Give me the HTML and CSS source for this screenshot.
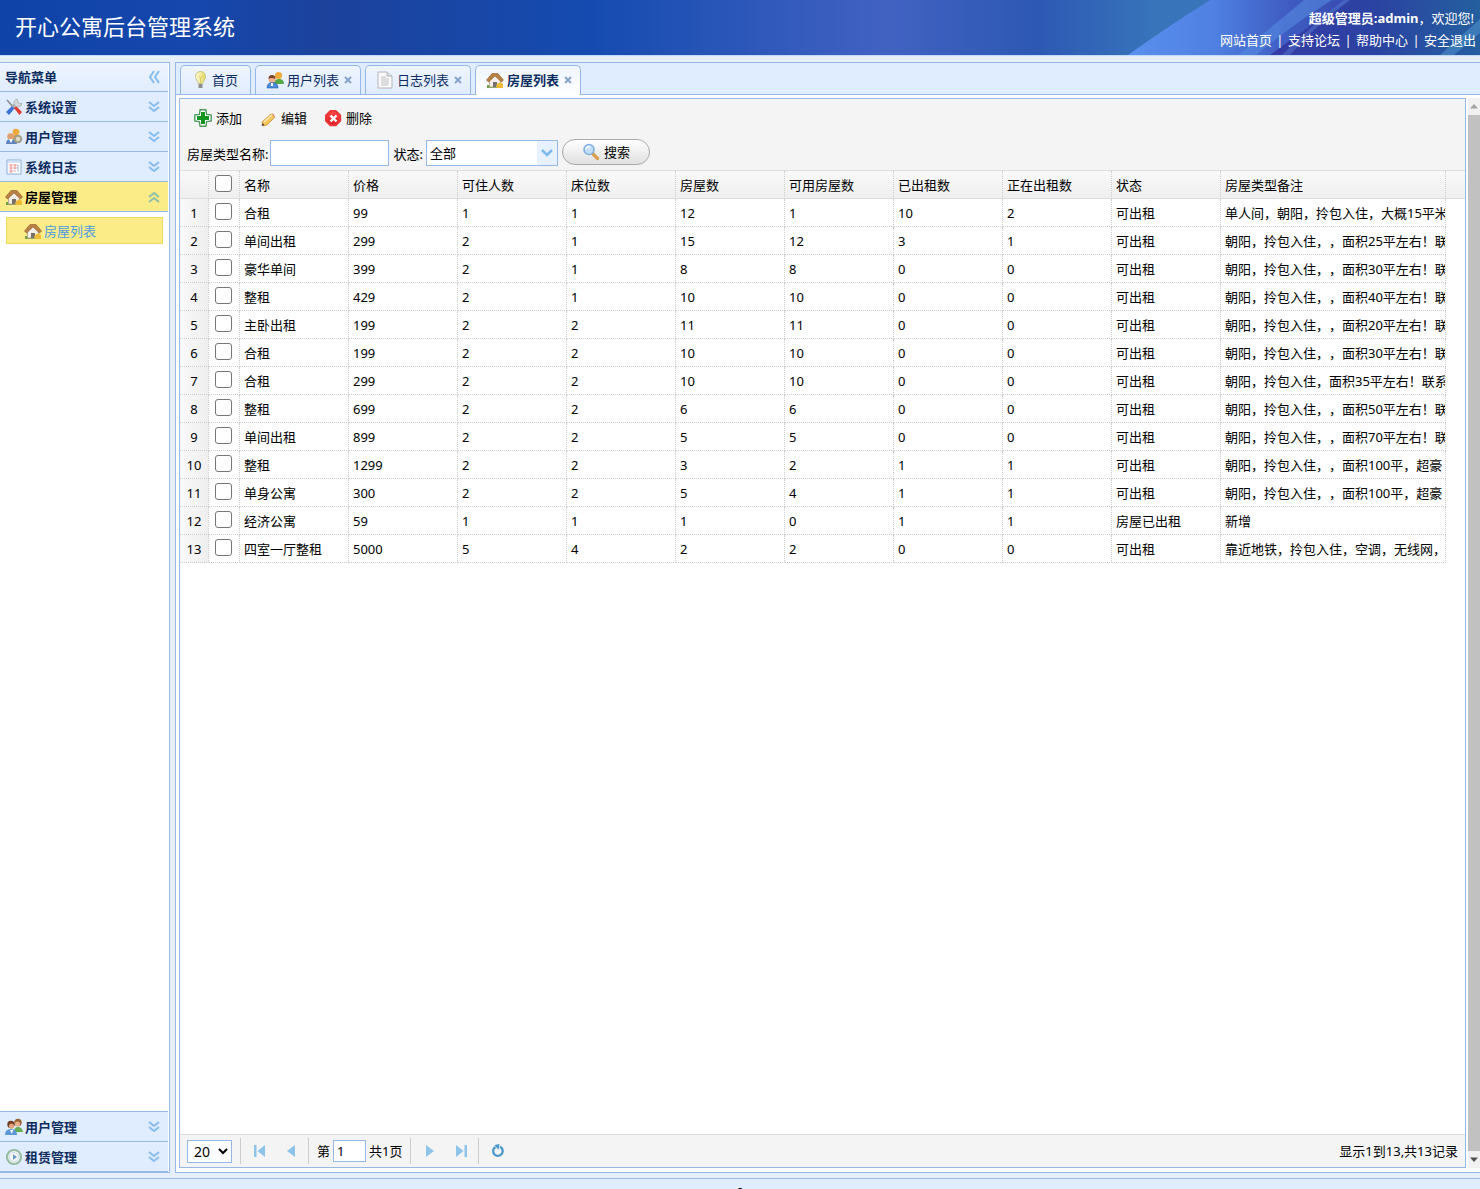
FILE: index.html
```html
<!DOCTYPE html>
<html lang="zh-CN">
<head>
<meta charset="utf-8">
<title>开心公寓后台管理系统</title>
<link rel="stylesheet" href="styles.css">
</head>
<body>
<svg class="defs" aria-hidden="true">
  <defs>
    <linearGradient id="g-bulb" x1="0" y1="0" x2="1" y2="0"><stop offset="0" stop-color="#fffde0"/><stop offset="1" stop-color="#e3d860"/></linearGradient>
    <linearGradient id="g-red" x1="0" y1="0" x2="0" y2="1"><stop offset="0" stop-color="#ff4a44"/><stop offset="1" stop-color="#e01c24"/></linearGradient>
  </defs>
  <symbol id="i-down" viewBox="0 0 16 16"><path d="M3 3l5 4 5-4M3 8l5 4 5-4" fill="none" stroke="#86bcf2" stroke-width="2"/></symbol>
  <symbol id="i-up" viewBox="0 0 16 16"><path d="M3 8l5-4 5 4M3 13l5-4 5 4" fill="none" stroke="#8fc0a8" stroke-width="2"/></symbol>
  <symbol id="i-left" viewBox="0 0 16 16"><path d="M8 2L4 8l4 6M13 2L9 8l4 6" fill="none" stroke="#86bcf2" stroke-width="2"/></symbol>
  <symbol id="i-house" viewBox="0 0 18 18"><path d="M1 14h16v3H1z" fill="#6fa04a"/><path d="M3.500 9l6-6 5 6v7h-11z" fill="#f3efe8" stroke="#b9a88c"/><path d="M7 16v-5h4v5z" fill="#75706a"/><path d="M.5 9l5.500-6.500h6l5.500 6.500-2 2L9 5l-6.500 6z" fill="#b98144" stroke="#8b5c2b" stroke-width=".6"/><path d="M10 15q3-6 7-2v4h-6z" fill="#efbd35"/></symbol>
  <symbol id="i-tools" viewBox="0 0 18 18"><path d="M2 2l8 9" stroke="#8c8c90" stroke-width="1.600"/><path d="M9 10l2-2 6 6-2.500 3z" fill="#e23a31"/><path d="M7 9l6-5" stroke="#a8adb2" stroke-width="2.400"/><path d="M12 1a4 4 0 1 0 5 4l-3 1-1-2z" fill="#d7dadd" stroke="#92989e" stroke-width=".6"/><path d="M1 14l6-6 2 3-5 6z" fill="#3b72d8"/></symbol>
  <symbol id="i-users" viewBox="0 0 18 18"><circle cx="12.500" cy="4.500" r="3.600" fill="#efac38"/><path d="M8 13q0-5 5-5t5 5z" fill="#55a844"/><circle cx="6" cy="8.500" r="3.500" fill="#f1b08e"/><path d="M2.500 8q0-4 3.500-4t3.500 4q-4-2-7 0z" fill="#7b4226"/><path d="M1 17q0-5.500 5.500-5.500t5.500 5.500z" fill="#4c8bd8" stroke="#2b5fa8" stroke-width=".6"/><path d="M5 12h2v3H5z" fill="#fff"/></symbol>
  <symbol id="i-usergear" viewBox="0 0 18 18"><circle cx="11" cy="4" r="3.300" fill="#efa93a"/><path d="M6 12q0-5 5-5t6 5z" fill="#d9993c"/><circle cx="5.500" cy="8.500" r="3.300" fill="#e0a070"/><path d="M1 16q0-5 5-5t6 5z" fill="#5c86bc"/><path d="M4 11l2 4 2-4z" fill="#fff"/><circle cx="13" cy="11" r="3.300" fill="#dcd9c4" stroke="#a39f86" stroke-width="2"/></symbol>
  <symbol id="i-pair" viewBox="0 0 18 18"><circle cx="13" cy="4.500" r="3.700" fill="#9b6236"/><circle cx="12.500" cy="6" r="2.500" fill="#eab18b"/><path d="M9 14q0-5 4-5t5 5z" fill="#67ac56"/><circle cx="6" cy="6.500" r="3.700" fill="#6d3b23"/><circle cx="6.500" cy="8" r="2.600" fill="#e5a078"/><path d="M0 17q0-6 6-6t6 6z" fill="#5b98d8"/><path d="M5 12h3l-1 4z" fill="#fff"/></symbol>
  <symbol id="i-log" viewBox="0 0 18 18"><path d="M2 2h14v14H2z" fill="#fff" stroke="#8caed7"/><path d="M3 3h12v2H3z" fill="#cfe2f8"/><path d="M4 7h9M4 10h9M4 13h7" stroke="#edabb5"/><path d="M6 6v9M10 6v5" stroke="#e7877f"/><path d="M13 7v7" stroke="#91bfe6"/></symbol>
  <symbol id="i-clock" viewBox="0 0 18 18"><circle cx="9" cy="9" r="7" fill="#f5faf6" stroke="#96bca4" stroke-width="2.200"/><circle cx="9" cy="9" r="4.500" fill="none" stroke="#cad8e6"/><path d="M8 6l4 3-4 3z" fill="#6d9ec2"/></symbol>
  <symbol id="i-bulb" viewBox="0 0 18 18"><path d="M9.500 0.500a5 5 0 0 0-5 5c0 3 2 4 3 7h4c1-3 3-4 3-7a5 5 0 0 0-5-5z" fill="url(#g-bulb)" stroke="#bfb767" stroke-width=".8"/><path d="M7.500 5l2 2 2-2M9.500 7v5" fill="none" stroke="#d7c34e" stroke-width=".8"/><path d="M7.500 13h4v4h-4z" fill="#8e8e92"/></symbol>
  <symbol id="i-page" viewBox="0 0 18 18"><path d="M2 1h9l5 4v12H2z" fill="#fafafa" stroke="#b4b4b8"/><path d="M11 1v4h5" fill="#e0e0e3" stroke="#b4b4b8"/><path d="M5 6h5M5 8h8M5 10h8M5 12h8M5 14h7" stroke="#c0c0c4"/></symbol>
  <symbol id="i-add" viewBox="0 0 18 18"><path d="M6 .8h6l.6 4.600 4.600.6v6l-4.600.6-.6 4.600H6l-.6-4.600L.8 12V6l4.600-.6z" fill="#fff" stroke="#4d9b5d" stroke-width="1.400" stroke-linejoin="round"/><path d="M7 3h4v4h4v4h-4v4H7v-4H3V7h4z" fill="#159421"/></symbol>
  <symbol id="i-edit" viewBox="-2 -1 18 18"><path d="M1 12l9-8 4 3-8 8-4 1z" fill="#f5c45a" stroke="#c69038" stroke-width=".8"/><path d="M10 4q3-2 4 3z" fill="#e59a80"/><path d="M3 12l8-7" stroke="#fff0bd" stroke-width="1.200"/><path d="M.5 16l1-3 2 2z" fill="#4c4334"/></symbol>
  <symbol id="i-delete" viewBox="0 0 18 18"><path d="M6 1h6l5 5v6l-5 5H6l-5-5V6z" transform="translate(1 1) scale(.9)" fill="url(#g-red)" stroke="#e8383a" stroke-width="2" stroke-linejoin="round"/><path d="M6.500 6.500l6 6M12.500 6.500l-6 6" stroke="#fff" stroke-width="2.400"/></symbol>
  <symbol id="i-search" viewBox="0 0 18 18"><path d="M10.500 10.500l5 5" stroke="#d99e51" stroke-width="3.200" stroke-linecap="round"/><circle cx="7" cy="6.500" r="5" fill="#c3e0fb" stroke="#82b0e4" stroke-width="1.600"/><path d="M4 6q1-3 4-2" stroke="#fff" fill="none" stroke-width="1.500"/></symbol>
  <symbol id="i-first" viewBox="0 0 16 16"><path d="M2 2h2.500v12H2zM13 2v12L5.500 8z"/></symbol>
  <symbol id="i-prev" viewBox="0 0 16 16"><path d="M12 2v12L4 8z"/></symbol>
  <symbol id="i-next" viewBox="0 0 16 16"><path d="M4 2v12l8-6z"/></symbol>
  <symbol id="i-last" viewBox="0 0 16 16"><path d="M3 2v12l7.500-6zM11.500 2H14v12h-2.500z"/></symbol>
  <symbol id="i-refresh" viewBox="0 0 16 16"><path d="M10 3.700a4.800 4.800 0 1 1-4.500.2" fill="none" stroke="#4a98cb" stroke-width="2.300"/><path d="M4.500 2l5-1-1 6z" fill="#4a98cb"/></symbol>
</svg>

<header class="banner">
  <svg class="banner-art" viewBox="0 0 1480 55" preserveAspectRatio="none" aria-hidden="true">
    <defs>
      <linearGradient id="b-base"><stop offset="0" stop-color="#1043a8"/><stop offset=".13" stop-color="#1547ad"/><stop offset=".22" stop-color="#1c429c"/><stop offset=".4" stop-color="#154bb0"/><stop offset=".52" stop-color="#3059bb"/><stop offset=".6" stop-color="#4262c2"/><stop offset=".7" stop-color="#2d58b4"/><stop offset=".78" stop-color="#3774ba"/><stop offset="1" stop-color="#3774ba"/></linearGradient>
      <linearGradient id="b-beam"><stop offset="0" stop-color="#5a90ee"/><stop offset=".35" stop-color="#4f80e2"/><stop offset=".65" stop-color="#3f5cc2"/><stop offset="1" stop-color="#3542a6"/></linearGradient>
      <linearGradient id="b-end"><stop offset="0" stop-color="#353ba5"/><stop offset=".5" stop-color="#2b43a2"/><stop offset="1" stop-color="#245f9f"/></linearGradient>
    </defs>
    <path d="M0 0h1480v55H0z" fill="url(#b-base)"/>
    <path d="M1128 55q42-30 82-55h164l-80 55z" fill="url(#b-beam)"/>
    <path d="M1270 55q40-30 80-55h130v55z" fill="url(#b-end)"/>
    <path d="M1238 55q36-30 66-55h28q-40 25-76 55z" fill="#558be0" opacity=".6"/>
    <path d="M1282 55q30-30 62-55h6q-34 25-60 55z" fill="#5f88da" opacity=".4"/>
    <path d="M1440 55l40-36v14l-26 22z" fill="#4c8fca" opacity=".6"/>
  </svg>
  <h1 class="brand">开心公寓后台管理系统</h1>
  <div class="account">
    <p class="welcome"><strong>超级管理员:admin</strong>，欢迎您!</p>
    <nav class="top-links"><a href="#">网站首页</a><span>|</span><a href="#">支持论坛</a><span>|</span><a href="#">帮助中心</a><span>|</span><a href="#">安全退出</a></nav>
  </div>
</header>

<div class="workspace">
  <aside class="sidebar">
    <div class="side-title"><span>导航菜单</span><button class="plain" aria-label="收起"><svg class="ic16"><use href="#i-left"/></svg></button></div>
    <button class="nav-item"><svg class="ic18"><use href="#i-tools"/></svg><span>系统设置</span><svg class="ic16"><use href="#i-down"/></svg></button>
    <button class="nav-item"><svg class="ic18"><use href="#i-usergear"/></svg><span>用户管理</span><svg class="ic16"><use href="#i-down"/></svg></button>
    <button class="nav-item"><svg class="ic18"><use href="#i-log"/></svg><span>系统日志</span><svg class="ic16"><use href="#i-down"/></svg></button>
    <button class="nav-item open"><svg class="ic18"><use href="#i-house"/></svg><span>房屋管理</span><svg class="ic16"><use href="#i-up"/></svg></button>
    <div class="nav-body"><a class="sub-item" href="#"><svg class="ic18"><use href="#i-house"/></svg><span>房屋列表</span></a></div>
    <button class="nav-item"><svg class="ic18"><use href="#i-pair"/></svg><span>用户管理</span><svg class="ic16"><use href="#i-down"/></svg></button>
    <button class="nav-item"><svg class="ic18"><use href="#i-clock"/></svg><span>租赁管理</span><svg class="ic16"><use href="#i-down"/></svg></button>
  </aside>

  <main class="main">
    <div class="tabs">
      <div class="tab"><svg class="ic18"><use href="#i-bulb"/></svg><a href="#">首页</a></div>
      <div class="tab closable"><svg class="ic18"><use href="#i-users"/></svg><a href="#">用户列表</a><button class="close" aria-label="关闭"><svg viewBox="0 0 8 8"><path d="M1 1l6 6M7 1L1 7"/></svg></button></div>
      <div class="tab closable"><svg class="ic18"><use href="#i-page"/></svg><a href="#">日志列表</a><button class="close" aria-label="关闭"><svg viewBox="0 0 8 8"><path d="M1 1l6 6M7 1L1 7"/></svg></button></div>
      <div class="tab closable active"><svg class="ic18"><use href="#i-house"/></svg><a href="#">房屋列表</a><button class="close" aria-label="关闭"><svg viewBox="0 0 8 8"><path d="M1 1l6 6M7 1L1 7"/></svg></button></div>
    </div>
    <div class="content">
      <section class="panel">
        <div class="toolbar">
          <div class="actions">
            <button class="plain action"><svg class="ic18"><use href="#i-add"/></svg>添加</button>
            <button class="plain action"><svg class="ic18"><use href="#i-edit"/></svg>编辑</button>
            <button class="plain action"><svg class="ic18"><use href="#i-delete"/></svg>删除</button>
          </div>
          <form class="filters">
            <label for="type-name">房屋类型名称:</label><input id="type-name" class="name-input" type="text">
            <label class="state-label" for="state">状态:</label>
            <select id="state" class="combo"><option>全部</option></select>
            <button class="search" type="button"><svg class="ic18"><use href="#i-search"/></svg>搜索</button>
          </form>
        </div>
        <div class="grid">
          <table>
            <colgroup><col class="c-num"><col class="c-check"><col span="9" class="c-data"><col class="c-note"></colgroup>
            <thead><tr><th></th><th><input type="checkbox" aria-label="全选"></th><th>名称</th><th>价格</th><th>可住人数</th><th>床位数</th><th>房屋数</th><th>可用房屋数</th><th>已出租数</th><th>正在出租数</th><th>状态</th><th>房屋类型备注</th></tr></thead>
            <tbody>
              <tr><td>1</td><td><input type="checkbox" aria-label="选择1"></td><td>合租</td><td>99</td><td>1</td><td>1</td><td>12</td><td>1</td><td>10</td><td>2</td><td>可出租</td><td>单人间，朝阳，拎包入住，大概15平米</td></tr>
              <tr><td>2</td><td><input type="checkbox" aria-label="选择2"></td><td>单间出租</td><td>299</td><td>2</td><td>1</td><td>15</td><td>12</td><td>3</td><td>1</td><td>可出租</td><td>朝阳，拎包入住，，面积25平左右！联</td></tr>
              <tr><td>3</td><td><input type="checkbox" aria-label="选择3"></td><td>豪华单间</td><td>399</td><td>2</td><td>1</td><td>8</td><td>8</td><td>0</td><td>0</td><td>可出租</td><td>朝阳，拎包入住，，面积30平左右！联</td></tr>
              <tr><td>4</td><td><input type="checkbox" aria-label="选择4"></td><td>整租</td><td>429</td><td>2</td><td>1</td><td>10</td><td>10</td><td>0</td><td>0</td><td>可出租</td><td>朝阳，拎包入住，，面积40平左右！联</td></tr>
              <tr><td>5</td><td><input type="checkbox" aria-label="选择5"></td><td>主卧出租</td><td>199</td><td>2</td><td>2</td><td>11</td><td>11</td><td>0</td><td>0</td><td>可出租</td><td>朝阳，拎包入住，，面积20平左右！联</td></tr>
              <tr><td>6</td><td><input type="checkbox" aria-label="选择6"></td><td>合租</td><td>199</td><td>2</td><td>2</td><td>10</td><td>10</td><td>0</td><td>0</td><td>可出租</td><td>朝阳，拎包入住，，面积30平左右！联</td></tr>
              <tr><td>7</td><td><input type="checkbox" aria-label="选择7"></td><td>合租</td><td>299</td><td>2</td><td>2</td><td>10</td><td>10</td><td>0</td><td>0</td><td>可出租</td><td>朝阳，拎包入住，面积35平左右！联系</td></tr>
              <tr><td>8</td><td><input type="checkbox" aria-label="选择8"></td><td>整租</td><td>699</td><td>2</td><td>2</td><td>6</td><td>6</td><td>0</td><td>0</td><td>可出租</td><td>朝阳，拎包入住，，面积50平左右！联</td></tr>
              <tr><td>9</td><td><input type="checkbox" aria-label="选择9"></td><td>单间出租</td><td>899</td><td>2</td><td>2</td><td>5</td><td>5</td><td>0</td><td>0</td><td>可出租</td><td>朝阳，拎包入住，，面积70平左右！联</td></tr>
              <tr><td>10</td><td><input type="checkbox" aria-label="选择10"></td><td>整租</td><td>1299</td><td>2</td><td>2</td><td>3</td><td>2</td><td>1</td><td>1</td><td>可出租</td><td>朝阳，拎包入住，，面积100平，超豪</td></tr>
              <tr><td>11</td><td><input type="checkbox" aria-label="选择11"></td><td>单身公寓</td><td>300</td><td>2</td><td>2</td><td>5</td><td>4</td><td>1</td><td>1</td><td>可出租</td><td>朝阳，拎包入住，，面积100平，超豪</td></tr>
              <tr><td>12</td><td><input type="checkbox" aria-label="选择12"></td><td>经济公寓</td><td>59</td><td>1</td><td>1</td><td>1</td><td>0</td><td>1</td><td>1</td><td>房屋已出租</td><td>新增</td></tr>
              <tr><td>13</td><td><input type="checkbox" aria-label="选择13"></td><td>四室一厅整租</td><td>5000</td><td>5</td><td>4</td><td>2</td><td>2</td><td>0</td><td>0</td><td>可出租</td><td>靠近地铁，拎包入住，空调，无线网，</td></tr>
            </tbody>
          </table>
        </div>
        <div class="pager">
          <select class="page-size" aria-label="每页条数"><option>20</option></select>
          <i class="sep"></i>
          <button class="plain page-btn" aria-label="第一页"><svg class="ic16"><use href="#i-first"/></svg></button>
          <button class="plain page-btn" aria-label="上一页"><svg class="ic16"><use href="#i-prev"/></svg></button>
          <i class="sep"></i>
          <label class="page-no">第<input type="text" value="1">共1页</label>
          <i class="sep"></i>
          <button class="plain page-btn" aria-label="下一页"><svg class="ic16"><use href="#i-next"/></svg></button>
          <button class="plain page-btn" aria-label="最后一页"><svg class="ic16"><use href="#i-last"/></svg></button>
          <i class="sep"></i>
          <button class="plain page-btn" aria-label="刷新"><svg class="ic16"><use href="#i-refresh"/></svg></button>
          <span class="total">显示1到13,共13记录</span>
        </div>
      </section>
      <div class="scrollbar" aria-hidden="true"><i class="arrow up"></i><i class="thumb"></i><i class="arrow down"></i></div>
    </div>
  </main>
</div>
<footer class="south">-</footer>
</body>
</html>
```

FILE: styles.css
```css
* { box-sizing: border-box; }

body {
  margin: 0;
  height: 100vh;
  display: flex;
  flex-direction: column;
  overflow: hidden;
  background: #e6eef8;
  color: #000;
  font: 13px/20px "Noto Sans", "Noto Sans CJK SC", sans-serif;
  text-spacing-trim: space-all;
}

button, input, select { font: inherit; color: inherit; }
button { cursor: pointer; }
a { color: inherit; text-decoration: none; }
svg { display: block; flex: none; }

.defs { position: absolute; width: 0; height: 0; }
.ic16 { width: 16px; height: 16px; }
.ic18 { width: 18px; height: 18px; }
.plain { border: 0; padding: 0; background: none; }

/* banner */
.banner {
  position: relative;
  flex: none;
  height: 56px;
  display: flex;
  justify-content: space-between;
  border-bottom: 1px solid #c3d9f5;
  color: #fff;
}
.banner-art { position: absolute; inset: 0; width: 100%; height: 100%; }
.brand {
  position: relative;
  margin: 0;
  padding-left: 15px;
  font-size: 22px;
  line-height: 52px;
  font-weight: 400;
}
.account {
  position: relative;
  padding: 7px 4px 0 0;
  text-align: right;
  line-height: 22px;
}
.welcome { margin: 0; padding-right: 2px; }
.top-links { display: flex; }
.top-links span { width: 16px; text-align: center; }

/* frame */
.workspace {
  flex: 1;
  min-height: 0;
  display: flex;
  gap: 5px;
  padding: 6px 0 5px;
}
.sidebar {
  flex: none;
  width: 170px;
  display: flex;
  flex-direction: column;
  border: 1px solid #95b8e7;
  border-left: 0;
  padding-right: 1px;
  background: #fff;
  color: #0e2d5f;
  font-weight: 700;
}
.side-title, .nav-item {
  flex: none;
  display: flex;
  align-items: center;
  height: 30px;
  border: 0;
  border-bottom: 1px solid #95b8e7;
  padding: 0 6px 0 5px;
  text-align: left;
}
.side-title {
  height: 29px;
  background: linear-gradient(#eff5ff, #e0ecff);
}
.nav-item { background: #e0ecff; }
.side-title span, .nav-item span { flex: 1; }
.nav-item span { padding-left: 2px; }
.nav-item.open { background: #fbec88; color: #000; }
.nav-body {
  flex: 1;
  padding: 5px;
  border-bottom: 1px solid #95b8e7;
  font-weight: 400;
}
.sub-item {
  display: flex;
  align-items: center;
  gap: 2px;
  height: 27px;
  margin-left: 1px;
  padding-left: 17px;
  border: 1px solid #f0d95c;
  background: #fbec88;
  color: #4e9be0;
}

/* tabs */
.main {
  flex: 1;
  min-width: 0;
  display: flex;
  flex-direction: column;
  border: 1px solid #95b8e7;
  border-right: 0;
  background: #fff;
}
.tabs {
  flex: none;
  display: flex;
  gap: 4px;
  height: 32px;
  padding: 2px 4px 0;
  border-bottom: 1px solid #95b8e7;
  background: #e0ecff;
}
.tab {
  display: flex;
  align-items: center;
  gap: 3px;
  height: 29px;
  padding: 0 12px 0 10px;
  border: 1px solid #95b8e7;
  border-bottom: 0;
  border-radius: 5px 5px 0 0;
  background: linear-gradient(#eff5ff, #e0ecff);
  color: #0e2d5f;
}
.tab.closable { padding-right: 8px; }
.tab.active {
  height: 30px;
  padding-bottom: 1px;
  background: linear-gradient(#eff5ff, #fff);
  font-weight: 700;
}
.close {
  width: 10px;
  height: 8px;
  padding: 0 0 0 2px;
  border: 0;
  background: none;
}
.close svg { width: 8px; height: 8px; }
.close path { stroke: #86a3cc; stroke-width: 2; }

/* content panel */
.content {
  flex: 1;
  min-height: 0;
  display: flex;
  gap: 2px;
  padding: 3px 0 4px 3px;
}
.panel {
  flex: 1;
  min-width: 0;
  display: flex;
  flex-direction: column;
  border: 1px solid #95b8e7;
}
.toolbar {
  flex: none;
  height: 72px;
  padding: 9px 7px 0;
  border-bottom: 1px solid #ddd;
  background: #f4f4f4;
}
.actions { display: flex; gap: 17px; padding-left: 7px; }
.action { display: flex; align-items: center; gap: 4px; height: 20px; }
.filters { display: flex; align-items: center; margin-top: 9px; height: 30px; }
.filters label { padding-top: 4px; }
.name-input {
  width: 119px;
  height: 26px;
  margin: 2px 0 0 2px;
  border: 1px solid #95b8e7;
  background: #fff;
}
.filters .state-label { margin: 0 3px 0 4px; }
.combo {
  appearance: none;
  width: 132px;
  height: 26px;
  margin: 2px 4px 0 0;
  padding: 0 3px;
  border: 1px solid #95b8e7;
  border-radius: 0;
  background:
    url("data:image/svg+xml,%3Csvg xmlns='http://www.w3.org/2000/svg' width='20' height='24'%3E%3Cpath d='M0 0h20v24H0z' fill='%23e8f1ff'/%3E%3Cpath d='M5 9l5 5 5-5' fill='none' stroke='%237cb8ee' stroke-width='2.500'/%3E%3C/svg%3E") right center no-repeat #fff;
}
.search {
  display: flex;
  align-items: center;
  justify-content: center;
  gap: 4px;
  width: 88px;
  height: 26px;
  border: 1px solid #aaa;
  border-radius: 13px;
  background: linear-gradient(#fff, #e0e0e0);
}

/* data grid */
.grid {
  flex: 1;
  min-height: 0;
  overflow: hidden;
  background: linear-gradient(#f9f9f9, #efefef 27px, #ddd 27px, #ddd 28px, #fff 28px);
}
table { width: 1266px; table-layout: fixed; border-collapse: separate; border-spacing: 0; }
.c-num { width: 29px; }
.c-check { width: 31px; }
.c-data { width: 109px; }
.c-note { width: 225px; }
th, td {
  height: 28px;
  padding: 0 0 0 4px;
  border-right: 1px dotted #ccc;
  border-bottom: 1px dotted #ccc;
  overflow: hidden;
  white-space: nowrap;
  text-align: left;
  font-weight: 400;
  line-height: 20px;
}
th { border-bottom: 1px solid #ddd; }
td:first-child { padding: 0; text-align: center; background: linear-gradient(90deg, #f9f9f9, #efefef); }
th:nth-child(2), td:nth-child(2) { padding: 0 0 2px 6px; }
.grid input {
  appearance: none;
  display: block;
  width: 17px;
  height: 17px;
  margin: 0;
  border: 1px solid #767676;
  border-radius: 3px;
  background: #fff;
}

/* pager */
.pager {
  flex: none;
  display: flex;
  align-items: center;
  height: 33px;
  padding: 0 7px;
  border-top: 1px solid #ddd;
  background: #f4f4f4;
}
.page-size {
  width: 45px;
  height: 23px;
  margin-right: 6px;
  padding: 0 0 0 2px;
  border: 1px solid #95b8e7;
  background: #fff;
  font-size: 14px;
}
.sep { width: 1px; height: 26px; margin: 0 3px 0 2px; background: #ccc; }
.page-btn {
  display: flex;
  justify-content: center;
  width: 31px;
  fill: #8ec4ea;
}
.page-no { display: flex; align-items: center; gap: 3px; padding: 0 6px 0 5px; }
.page-no input {
  width: 33px;
  height: 22px;
  padding: 0 3px;
  border: 1px solid #95b8e7;
  background: #fff;
}
.total { margin-left: auto; }

/* scrollbar */
.scrollbar {
  flex: none;
  width: 12px;
  display: flex;
  flex-direction: column;
  align-items: center;
  background: #f1f1f1;
}
.thumb { flex: 1; align-self: stretch; background: #c1c1c1; }
.arrow { height: 17px; width: 8px; }
.arrow.up { background: #a3a3a3; clip-path: polygon(50% 35%, 100% 62%, 0 62%); }
.arrow.down { background: #505050; clip-path: polygon(0 38%, 100% 38%, 50% 65%); }

.south {
  flex: none;
  height: 11px;
  overflow: hidden;
  border-top: 1px solid #95b8e7;
  background: #e0ecff;
  text-align: center;
  line-height: 16px;
}
```
